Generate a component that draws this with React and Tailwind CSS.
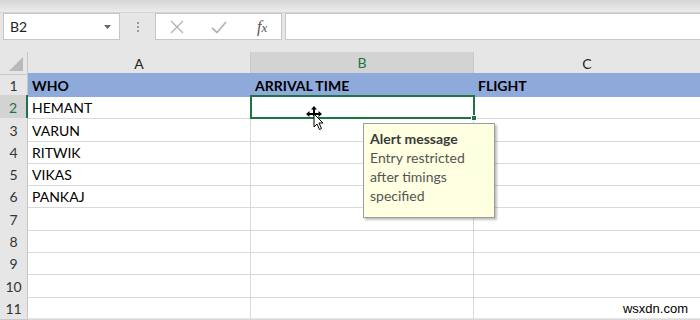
import React from 'react';

const ROWS = [
  ['WHO', 'ARRIVAL TIME', 'FLIGHT'],
  ['HEMANT', '', ''],
  ['VARUN', '', ''],
  ['RITWIK', '', ''],
  ['VIKAS', '', ''],
  ['PANKAJ', '', ''],
  ['', '', ''],
  ['', '', ''],
  ['', '', ''],
  ['', '', ''],
  ['', '', ''],
];

const font = { fontFamily: 'Lato, "Noto Sans", sans-serif' };

const MoveCursor = () => (
  <svg width="24" height="28" viewBox="0 0 24 28" className="absolute left-[304px] top-[105px]">
    {/* move cross */}
    <path d="M10 1 L13 4.5 L11 4.5 L11 8 L14.5 8 L14.5 6 L18 9 L14.5 12 L14.5 10 L11 10 L11 11 L9 11 L9 10 L5.5 10 L5.5 12 L2 9 L5.5 6 L5.5 8 L9 8 L9 4.5 L7 4.5 Z" fill="#000" />
    {/* arrow */}
    <path d="M10 9 L10 22 L13 19 L15.5 24.5 L17.5 23.5 L15 18 L19 18 Z" fill="#fff" stroke="#000" strokeWidth="1" />
  </svg>
);

export default function App() {
  return (
    <div className="w-[700px] h-[320px] overflow-hidden bg-[#e6e6e6] relative" style={font}>
      {/* ribbon edge */}
      <div className="h-[13px] bg-gradient-to-b from-[#d6d6d6] to-[#ececec] border-b border-[#d4d4d4]" />

      {/* formula bar */}
      <div className="h-[27px] flex items-stretch">
        <div className="ml-[3px] w-[117px] bg-white border border-[#c6c6c6] flex items-center justify-between pl-[6px] pr-[8px]">
          <span className="text-[14px] text-[#222]">B2</span>
          <svg width="7" height="4" viewBox="0 0 7 4"><path d="M0 0 L7 0 L3.5 4 Z" fill="#666" /></svg>
        </div>
        <div className="w-[35px] flex flex-col items-center justify-center gap-[2px]">
          <span className="w-[2px] h-[2px] bg-[#9a9a9a]" />
          <span className="w-[2px] h-[2px] bg-[#9a9a9a]" />
          <span className="w-[2px] h-[2px] bg-[#9a9a9a]" />
        </div>
        <div className="w-[127px] bg-white border border-[#c6c6c6] flex items-center">
          <svg width="14" height="14" viewBox="0 0 14 14" className="ml-[14px]">
            <path d="M1 1 L13 13 M13 1 L1 13" stroke="#b4b4b4" strokeWidth="1.4" />
          </svg>
          <svg width="16" height="14" viewBox="0 0 16 14" className="ml-[27px]">
            <path d="M1 8 L6 12.5 L15 2" stroke="#b4b4b4" strokeWidth="1.8" fill="none" />
          </svg>
          <span className="ml-[30px] text-[16px] italic text-[#555]" style={{ fontFamily: '"Liberation Serif", serif' }}>
            f<span className="text-[13px]">x</span>
          </span>
        </div>
        <div className="ml-[3px] flex-1 bg-white border border-[#c6c6c6] border-r-0" />
      </div>

      <div className="h-[12px]" />

      {/* sheet */}
      <div className="bg-white">
        <div className="grid grid-cols-[28px_223px_223px_1fr] h-[21px] bg-[#e6e6e6] text-[14px]">
          <div className="relative border-r border-[#c8c8c8] border-b border-b-[#c8c8c8]">
            <svg width="14" height="14" viewBox="0 0 14 14" className="absolute right-[4px] bottom-[3px]">
              <path d="M14 0 L14 14 L0 14 Z" fill="#b9b9b9" />
            </svg>
          </div>
          <div className="flex items-center justify-center border-r border-[#c8c8c8] border-b border-b-[#c8c8c8] text-[#222]">A</div>
          <div className="flex items-center justify-center bg-[#d3d3d3] border-r border-[#c8c8c8] border-b-2 border-b-[#217346] text-[#217346]">B</div>
          <div className="flex items-center justify-center border-b border-[#c8c8c8] text-[#222]">C</div>
        </div>

        {ROWS.map((row, i) => {
          const selected = i === 1;
          return (
            <div key={i} className="grid grid-cols-[28px_223px_223px_1fr] h-[22.3px] text-[14px]">
              <div
                className={`flex items-center justify-center pt-[2px] border-b border-[#c8c8c8] ${
                  selected
                    ? 'bg-[#d3d3d3] text-[#217346] border-r-2 border-r-[#217346]'
                    : 'bg-[#e6e6e6] text-[#333] border-r border-r-[#c8c8c8]'
                }`}
              >
                {i + 1}
              </div>
              {row.map((cell, j) => (
                <div
                  key={j}
                  className={`flex items-center pl-[4px] pt-[2px] text-black border-b border-[#d9d9d9] ${
                    j < 2 ? 'border-r' : ''
                  } ${i === 0 ? 'bg-[#8eaadb] font-bold border-b-[#8eaadb] border-r-[#8eaadb]' : ''}`}
                >
                  {cell}
                </div>
              ))}
            </div>
          );
        })}
      </div>

      {/* selected cell B2 */}
      <div className="absolute left-[250px] top-[95px] w-[225px] h-[24px] border-2 border-[#217346]">
        <div className="absolute -right-[4px] -bottom-[4px] w-[6px] h-[6px] bg-[#217346] border border-white" />
      </div>

      <MoveCursor />

      {/* input message tooltip */}
      <div className="absolute left-[363px] top-[123px] w-[132px] h-[95px] bg-[#ffffe1] border border-[#9c9c9c] shadow-[2px_2px_2px_rgba(0,0,0,0.25)] pl-[6px] pt-[5px] text-[14px] leading-[19px]">
        <div className="font-bold text-[#3a3a3a]">Alert message</div>
        <div className="text-[#555]">Entry restricted</div>
        <div className="text-[#555]">after timings</div>
        <div className="text-[#555]">specified</div>
      </div>

      <div className="absolute right-[12px] bottom-[2px] text-[13px] text-black" style={{ fontFamily: '"Liberation Sans", Arial, sans-serif' }}>
        wsxdn.com
      </div>
    </div>
  );
}
